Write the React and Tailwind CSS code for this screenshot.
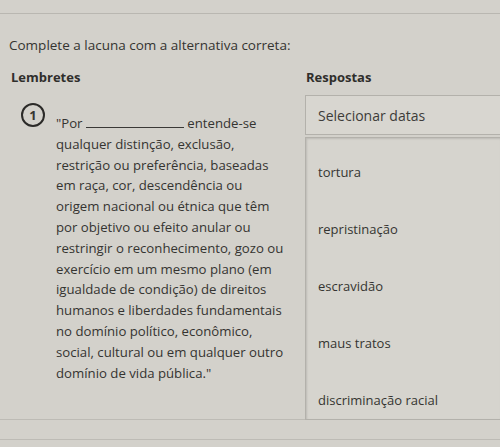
import React from "react";

const respostas = ["tortura", "repristinação", "escravidão", "maus tratos", "discriminação racial"];

const linhas = [
    "qualquer distinção, exclusão,",
    "restrição ou preferência, baseadas",
    "em raça, cor, descendência ou",
    "origem nacional ou étnica que têm",
    "por objetivo ou efeito anular ou",
    "restringir o reconhecimento, gozo ou",
    "exercício em um mesmo plano (em",
    "igualdade de condição) de direitos",
    "humanos e liberdades fundamentais",
    "no domínio político, econômico,",
    "social, cultural ou em qualquer outro",
    "domínio de vida pública.\"",
];

const App = () => {
    return (
        <div className="w-[500px] h-[447px] overflow-hidden bg-[#d3d1cb] text-[#353431] font-['Open_Sans',sans-serif] text-[13px]">
            <div className="h-[14px] border-b border-[#b9b7b1]"/>

            <p className="pl-[9px] pt-[21px] leading-[20px] text-[13.5px]">Complete a lacuna com a alternativa correta:</p>

            <div className="flex pt-[12px] font-bold leading-[20px] text-[#2f2e2b]">
                <div className="w-[306px] pl-[11px]">Lembretes</div>
                <div>Respostas</div>
            </div>

            <div className="flex pt-[8px]">
                <div className="w-[305px] flex items-start pl-[21px] border-b border-[#bdbbb5]">
                    <div className="mt-[8px] w-[24px] h-[24px] rounded-full border-2 border-[#2b2a28] flex items-center justify-center font-bold text-[13px] leading-none shrink-0">
                        1
                    </div>
                    <div className="ml-[11px] leading-[20.8px] pt-[18px] text-[13.2px]">
                        <p>
                            "Por <span className="inline-block w-[98px] border-b border-[#3a3936]"/> entende-se
                        </p>
                        {linhas.map((l) => (
                            <p key={l}>{l}</p>
                        ))}
                    </div>
                </div>

                <div className="flex-1 flex flex-col">
                    <div className="h-[40px] border border-r-0 border-[#b3b1ab] bg-[#d8d6d0] flex items-center pl-[12px] text-[14px] text-[#3d3c39]">
                        Selecionar datas
                    </div>
                    <div className="mt-[2px] h-[283px] border border-r-0 border-[#b3b1ab] bg-[#d6d4ce] shadow-[inset_1px_1px_2px_rgba(0,0,0,0.12)] pt-[24px] pl-[12px]">
                        {respostas.map((r) => (
                            <div key={r} className="h-[57px] leading-[20px]">{r}</div>
                        ))}
                    </div>
                </div>
            </div>

            <div className="h-[20px] border-b border-[#bdbbb5]"/>
        </div>
    );
};

export default App;
